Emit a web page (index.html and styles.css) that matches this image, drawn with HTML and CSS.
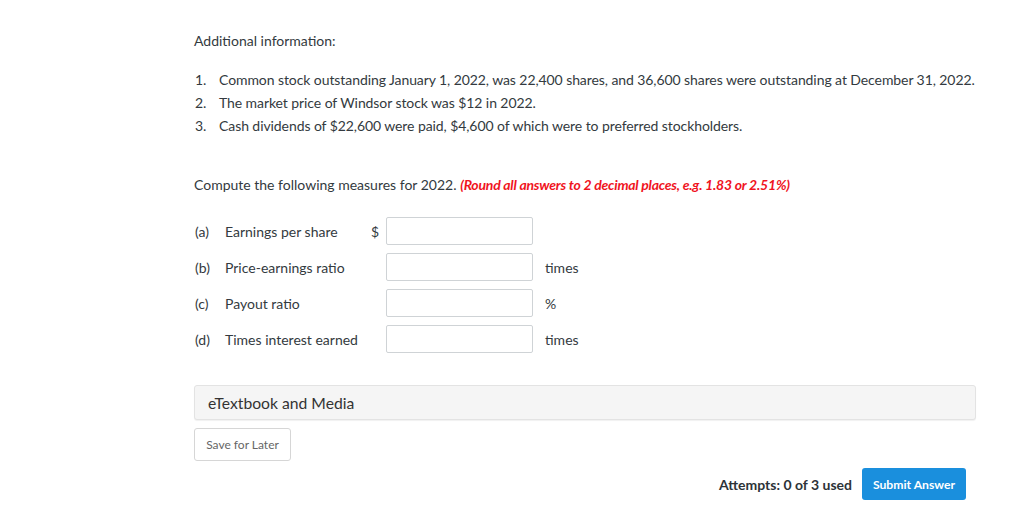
FILE: index.html
```html
<!DOCTYPE html>
<html>
<head>
<meta charset="utf-8">
<link rel="stylesheet" href="styles.css">
</head>
<body>
<div class="page">
  <p class="intro">Additional information:</p>
  <ol class="info">
    <li><span class="num">1.</span>Common stock outstanding January 1, 2022, was 22,400 shares, and 36,600 shares were outstanding at December 31, 2022.</li>
    <li><span class="num">2.</span>The market price of Windsor stock was $12 in 2022.</li>
    <li><span class="num">3.</span>Cash dividends of $22,600 were paid, $4,600 of which were to preferred stockholders.</li>
  </ol>
  <p class="compute">Compute the following measures for 2022. <em class="note">(Round all answers to 2 decimal places, e.g. 1.83 or 2.51%)</em></p>
  <div class="rows">
    <div class="row"><span class="letter">(a)</span><span class="label">Earnings per share</span><span class="cur">$</span><span class="input"></span><span class="unit"></span></div>
    <div class="row"><span class="letter">(b)</span><span class="label">Price-earnings ratio</span><span class="cur"></span><span class="input"></span><span class="unit">times</span></div>
    <div class="row"><span class="letter">(c)</span><span class="label">Payout ratio</span><span class="cur"></span><span class="input"></span><span class="unit">%</span></div>
    <div class="row"><span class="letter">(d)</span><span class="label">Times interest earned</span><span class="cur"></span><span class="input"></span><span class="unit">times</span></div>
  </div>
  <div class="media">eTextbook and Media</div>
  <button class="save">Save for Later</button>
  <div class="footer">
    <span class="attempts">Attempts: 0 of 3 used</span>
    <button class="submit">Submit Answer</button>
  </div>
</div>
</body>
</html>
```
FILE: styles.css
```css
html, body {
  margin: 0;
  padding: 0;
  background: #ffffff;
}
body {
  font-family: Lato, "Open Sans", sans-serif;
  color: #333a40;
  font-size: 14px;
}
.page {
  width: 782px;
  margin-left: 194px;
  padding-top: 31px;
}
.intro {
  margin: 0;
  line-height: 20px;
}
.info {
  list-style: none;
  margin: 17px 0 0 0;
  padding: 0;
}
.info li {
  line-height: 23px;
  display: flex;
  white-space: nowrap;
  letter-spacing: -0.08px;
}
.num {
  display: inline-block;
  width: 25px;
  padding-left: 1px;
  box-sizing: border-box;
  letter-spacing: 0;
}
.compute {
  margin: 38px 0 0 0;
  line-height: 20px;
}
.note {
  color: #f0141e;
  font-weight: bold;
  font-style: italic;
  letter-spacing: -0.23px;
}
.rows {
  margin-top: 22px;
}
.row {
  display: flex;
  align-items: center;
  height: 28px;
  margin-bottom: 8px;
}
.letter {
  width: 31px;
  padding-left: 1px;
  box-sizing: border-box;
}
.label {
  width: 146px;
}
.cur {
  width: 15px;
}
.input {
  width: 147px;
  height: 28px;
  border: 1px solid #cfd3d6;
  border-radius: 2px;
  box-sizing: border-box;
  background: #fff;
}
.unit {
  margin-left: 12px;
}
.media {
  margin-top: 32px;
  height: 35px;
  box-sizing: border-box;
  background: #f5f5f5;
  border: 1px solid #e3e3e3;
  border-radius: 3px;
  box-shadow: 0 1px 1px rgba(0,0,0,0.06);
  padding-left: 13px;
  display: flex;
  align-items: center;
  font-size: 15.7px;
  color: #333;
}
.save {
  display: block;
  margin-top: 8px;
  width: 97px;
  height: 33px;
  background: #fff;
  border: 1px solid #d6d6d6;
  border-radius: 3px;
  font-family: Lato, sans-serif;
  font-size: 12px;
  color: #666;
  padding: 0;
}
.footer {
  display: flex;
  justify-content: flex-end;
  align-items: center;
  margin-top: 7px;
  padding-right: 10px;
}
.attempts {
  font-weight: bold;
  font-size: 14px;
  color: #2d3338;
  margin-right: 10px;
}
.submit {
  width: 104px;
  height: 32px;
  background: #1a8fdd;
  color: #fff;
  border: none;
  border-radius: 3px;
  font-family: Lato, sans-serif;
  font-size: 12.2px;
  font-weight: bold;
  padding: 0;
}
```
